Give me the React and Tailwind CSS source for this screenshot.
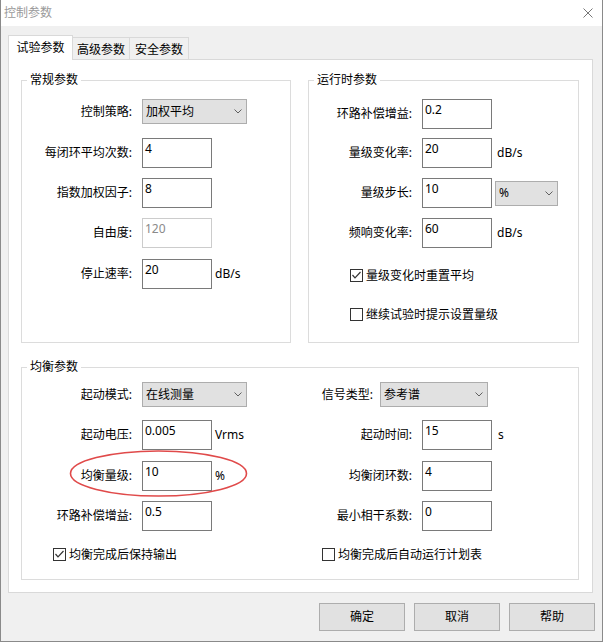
import React from "react";

const Chevron = () => (
  <svg width="8" height="5" viewBox="0 0 8 5" className="shrink-0">
    <polyline points="0.5,0.5 4,4 7.5,0.5" fill="none" stroke="#606060" strokeWidth="1" />
  </svg>
);

function Combo({ w, value }) {
  return (
    <div className={`${w} h-[25px] bg-[#e1e1e1] border border-[#adadad] flex items-center justify-between pl-[3px] pr-[4px] shrink-0`}>
      <span>{value}</span>
      <Chevron />
    </div>
  );
}

function Input({ value, disabled }) {
  return (
    <div
      className={`w-[70px] h-[30px] border bg-white pl-[2px] pt-[2px] shrink-0 ${
        disabled ? "border-[#cccccc] text-[#8a8a8a]" : "border-[#7a7a7a]"
      }`}
    >
      {value}
    </div>
  );
}

function Check({ checked, label, className }) {
  return (
    <div className={`flex items-center h-[13px] ${className}`}>
      <div className="w-[13px] h-[13px] border border-[#333333] bg-white flex items-center justify-center shrink-0">
        {checked && (
          <svg width="11" height="11" viewBox="0 0 11 11">
            <polyline points="1.5,5 4,7.8 9.5,2" fill="none" stroke="#333333" strokeWidth="1.2" />
          </svg>
        )}
      </div>
      <span className="ml-[3px] whitespace-nowrap">{label}</span>
    </div>
  );
}

export default function App() {
  return (
    <div className="relative w-[603px] h-[642px] flex flex-col bg-[#f0f0f0] border-x border-b border-[#8a8a8a] text-[12px] leading-[16px] text-black font-['Noto_Sans','Noto_Sans_CJK_SC',sans-serif]">
      {/* title bar */}
      <div className="h-[26px] shrink-0 bg-white flex items-center justify-between pl-[3px] pr-[9px]">
        <span className="text-[#9a9a9a]">控制参数</span>
        <svg width="10" height="10" viewBox="0 0 10 10">
          <line x1="0.5" y1="0.5" x2="9.5" y2="9.5" stroke="#777777" strokeWidth="1" />
          <line x1="9.5" y1="0.5" x2="0.5" y2="9.5" stroke="#777777" strokeWidth="1" />
        </svg>
      </div>

      <div className="flex-1 flex flex-col pl-[7px] pr-[9px] pt-[9px]">
        {/* tabs */}
        <div className="flex items-end h-[24px]">
          <div className="relative z-10 w-[65px] h-[25px] -mb-px bg-white border border-b-0 border-[#d9d9d9] flex items-center justify-center">
            试验参数
          </div>
          <div className="w-[57px] h-[22px] border-t border-r border-[#d9d9d9] flex items-center justify-center pt-[2px]">
            高级参数
          </div>
          <div className="w-[59px] h-[22px] border-t border-r border-[#d9d9d9] flex items-center justify-center pt-[2px]">
            安全参数
          </div>
        </div>

        {/* tab panel */}
        <div className="h-[534px] bg-white border border-[#d9d9d9] px-[12px] pt-[12px]">
          <div className="flex gap-[17px]">
            {/* 常规参数 */}
            <fieldset className="w-[270px] h-[271px] border border-[#dcdcdc]">
              <legend className="ml-[5px] px-[3px] leading-[16px]">常规参数</legend>
              <div className="flex flex-col">
                <div className="flex items-center h-[25px] mt-[11px]">
                  <div className="w-[110px] text-right shrink-0">控制策略:</div>
                  <div className="ml-[10px]">
                    <Combo w="w-[105px]" value="加权平均" />
                  </div>
                </div>
                <div className="flex items-center h-[30px] mt-[14px]">
                  <div className="w-[110px] text-right shrink-0">每闭环平均次数:</div>
                  <div className="ml-[10px]">
                    <Input value="4" />
                  </div>
                </div>
                <div className="flex items-center h-[30px] mt-[10px]">
                  <div className="w-[110px] text-right shrink-0">指数加权因子:</div>
                  <div className="ml-[10px]">
                    <Input value="8" />
                  </div>
                </div>
                <div className="flex items-center h-[30px] mt-[10px]">
                  <div className="w-[110px] text-right shrink-0">自由度:</div>
                  <div className="ml-[10px]">
                    <Input value="120" disabled />
                  </div>
                </div>
                <div className="flex items-center h-[30px] mt-[11px]">
                  <div className="w-[110px] text-right shrink-0">停止速率:</div>
                  <div className="ml-[10px]">
                    <Input value="20" />
                  </div>
                  <span className="ml-[3px]">dB/s</span>
                </div>
              </div>
            </fieldset>

            {/* 运行时参数 */}
            <fieldset className="w-[271px] h-[271px] border border-[#dcdcdc]">
              <legend className="ml-[5px] px-[3px] leading-[16px]">运行时参数</legend>
              <div className="flex flex-col">
                <div className="flex items-center h-[30px] mt-[11px]">
                  <div className="w-[103px] text-right shrink-0">环路补偿增益:</div>
                  <div className="ml-[10px]">
                    <Input value="0.2" />
                  </div>
                </div>
                <div className="flex items-center h-[30px] mt-[9px]">
                  <div className="w-[103px] text-right shrink-0">量级变化率:</div>
                  <div className="ml-[10px]">
                    <Input value="20" />
                  </div>
                  <span className="ml-[5px]">dB/s</span>
                </div>
                <div className="flex items-center h-[30px] mt-[10px]">
                  <div className="w-[103px] text-right shrink-0">量级步长:</div>
                  <div className="ml-[10px]">
                    <Input value="10" />
                  </div>
                  <div className="ml-[3px]">
                    <Combo w="w-[63px]" value="%" />
                  </div>
                </div>
                <div className="flex items-center h-[30px] mt-[10px]">
                  <div className="w-[103px] text-right shrink-0">频响变化率:</div>
                  <div className="ml-[10px]">
                    <Input value="60" />
                  </div>
                  <span className="ml-[5px]">dB/s</span>
                </div>
                <Check checked label="量级变化时重置平均" className="mt-[21px] ml-[41px]" />
                <Check label="继续试验时提示设置量级" className="mt-[26px] ml-[41px]" />
              </div>
            </fieldset>
          </div>

          {/* 均衡参数 */}
          <fieldset className="w-[558px] h-[221px] mt-[16px] border border-[#dcdcdc]">
            <legend className="ml-[5px] px-[3px] leading-[16px]">均衡参数</legend>
            <div className="flex flex-col">
              <div className="flex items-center h-[25px] mt-[7px]">
                <div className="w-[278px] flex items-center shrink-0">
                  <div className="w-[110px] text-right shrink-0">起动模式:</div>
                  <div className="ml-[10px]">
                    <Combo w="w-[105px]" value="在线测量" />
                  </div>
                </div>
                <div className="flex items-center">
                  <div className="w-[73px] text-right shrink-0">信号类型:</div>
                  <div className="ml-[7px]">
                    <Combo w="w-[108px]" value="参考谱" />
                  </div>
                </div>
              </div>

              <div className="flex items-center h-[30px] mt-[13px]">
                <div className="w-[278px] flex items-center shrink-0">
                  <div className="w-[110px] text-right shrink-0">起动电压:</div>
                  <div className="ml-[10px]">
                    <Input value="0.005" />
                  </div>
                  <span className="ml-[3px]">Vrms</span>
                </div>
                <div className="flex items-center">
                  <div className="w-[112px] text-right shrink-0">起动时间:</div>
                  <div className="ml-[10px]">
                    <Input value="15" />
                  </div>
                  <span className="ml-[6px]">s</span>
                </div>
              </div>

              <div className="flex items-center h-[30px] mt-[11px]">
                <div className="w-[278px] flex items-center shrink-0">
                  <div className="w-[110px] text-right shrink-0">均衡量级:</div>
                  <div className="ml-[10px]">
                    <Input value="10" />
                  </div>
                  <span className="ml-[3px]">%</span>
                </div>
                <div className="flex items-center">
                  <div className="w-[112px] text-right shrink-0">均衡闭环数:</div>
                  <div className="ml-[10px]">
                    <Input value="4" />
                  </div>
                </div>
              </div>

              <div className="flex items-center h-[30px] mt-[10px]">
                <div className="w-[278px] flex items-center shrink-0">
                  <div className="w-[110px] text-right shrink-0">环路补偿增益:</div>
                  <div className="ml-[10px]">
                    <Input value="0.5" />
                  </div>
                </div>
                <div className="flex items-center">
                  <div className="w-[112px] text-right shrink-0">最小相干系数:</div>
                  <div className="ml-[10px]">
                    <Input value="0" />
                  </div>
                </div>
              </div>

              <div className="flex items-center mt-[17px]">
                <div className="w-[278px] shrink-0">
                  <Check checked label="均衡完成后保持输出" className="ml-[31px]" />
                </div>
                <Check label="均衡完成后自动运行计划表" className="ml-[22px]" />
              </div>
            </div>
          </fieldset>
        </div>

        {/* buttons */}
        <div className="flex justify-end gap-[9px] mt-[10px] -mr-[2px]">
          <div className="w-[86px] h-[28px] bg-[#e1e1e1] border border-[#adadad] flex items-center justify-center">确定</div>
          <div className="w-[86px] h-[28px] bg-[#e1e1e1] border border-[#adadad] flex items-center justify-center">取消</div>
          <div className="w-[86px] h-[28px] bg-[#e1e1e1] border border-[#adadad] flex items-center justify-center">帮助</div>
        </div>
      </div>

      {/* red annotation ellipse */}
      <svg className="absolute left-[68px] top-[450px] pointer-events-none" width="180" height="48" viewBox="0 0 180 48">
        <ellipse cx="89.5" cy="23.5" rx="88" ry="22.5" fill="none" stroke="#e04a4a" strokeWidth="1.6" />
      </svg>
    </div>
  );
}
